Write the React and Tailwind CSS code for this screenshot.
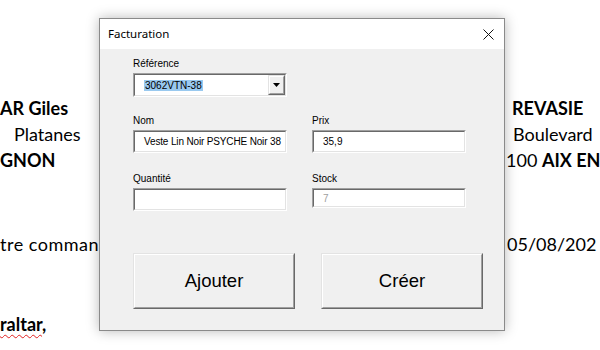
function Sunken({ className = "", children }) {
  return (
    <div className={`border border-t-[#a0a0a0] border-l-[#a0a0a0] border-b-white border-r-white ${className}`}>
      <div className="h-full border border-t-[#696969] border-l-[#696969] border-b-[#e3e3e3] border-r-[#e3e3e3] bg-white flex items-center overflow-hidden">
        {children}
      </div>
    </div>
  );
}

function Raised({ className = "", children }) {
  return (
    <div className={`border border-t-[#e3e3e3] border-l-[#e3e3e3] border-b-[#696969] border-r-[#696969] bg-[#f0f0f0] ${className}`}>
      <div className="h-full border border-t-white border-l-white border-b-[#a0a0a0] border-r-[#a0a0a0] flex items-center justify-center">
        {children}
      </div>
    </div>
  );
}

function Label({ children }) {
  return <div className="h-[14px] leading-[14px] text-[10px] mb-[2px] text-black">{children}</div>;
}

export default function App() {
  return (
    <div className="relative w-[600px] h-[350px] overflow-hidden bg-white">
      {/* document behind */}
      <div className="flex justify-between h-full font-['Lato',sans-serif] text-[18px] text-black whitespace-nowrap">
        <div className="flex flex-col pt-[95px] leading-[26px]">
          <div className="font-bold">AR Giles</div>
          <div className="pl-[14px]">Platanes</div>
          <div className="font-bold">GNON</div>
          <div className="mt-[58px] tracking-[0.5px]">tre comman</div>
          <div className="mt-[54px] font-bold">
            <span className="underline decoration-wavy decoration-[#e02020] decoration-1 underline-offset-[3px]">raltar</span>,
          </div>
        </div>
        <div className="flex flex-col pt-[95px] leading-[26px] w-[94px] overflow-hidden">
          <div className="font-bold pl-[6px]">REVASIE</div>
          <div className="pl-[7px]">Boulevard</div>
          <div>
            100 <span className="font-bold">AIX EN</span>
          </div>
          <div className="mt-[58px] pl-[1px]">05/08/202</div>
        </div>
      </div>

      {/* dialog */}
      <div className="absolute left-[99px] top-[18px] w-[406px] h-[313px] border border-[#8a8a8a] bg-[#f0f0f0] shadow-[0_0_12px_rgba(0,0,0,0.28)] font-['Liberation_Sans',Arial,sans-serif] whitespace-nowrap">
        <div className="h-[30px] bg-white flex items-center justify-between pl-[8px] pr-[10px]">
          <span className="font-['Noto_Sans',sans-serif] text-[11.5px] text-black">Facturation</span>
          <svg width="11" height="11" viewBox="0 0 11 11">
            <path d="M0.5 0.5 L10.5 10.5 M10.5 0.5 L0.5 10.5" stroke="#111" strokeWidth="1" fill="none" />
          </svg>
        </div>
        <div className="flex flex-col pl-[33px] pt-[8px]">
          <Label>Référence</Label>
          <Sunken className="w-[154px] h-[24px]">
            <div className="flex-1 pl-[9px] text-[10px]">
              <span className="bg-[#99c9ef] px-[1px]">3062VTN-38</span>
            </div>
            <Raised className="w-[17px] h-full">
              <svg width="7" height="4" viewBox="0 0 7 4">
                <path d="M0 0 H7 L3.5 4 Z" fill="#000" />
              </svg>
            </Raised>
          </Sunken>

          <div className="grid grid-cols-[154px_154px] gap-x-[25px] mt-[17px]">
            <div>
              <Label>Nom</Label>
              <Sunken className="h-[23px]">
                <span className="pl-[9px] text-[10px] tracking-[-0.15px]">Veste Lin Noir PSYCHE Noir 38</span>
              </Sunken>
            </div>
            <div>
              <Label>Prix</Label>
              <Sunken className="h-[23px]">
                <span className="pl-[9px] text-[10px]">35,9</span>
              </Sunken>
            </div>
          </div>

          <div className="grid grid-cols-[154px_154px] gap-x-[25px] mt-[19px] items-start">
            <div>
              <Label>Quantité</Label>
              <Sunken className="h-[23px]" />
            </div>
            <div>
              <Label>Stock</Label>
              <Sunken className="h-[20px]">
                <span className="pl-[9px] text-[10px] text-[#a0a0a0]">7</span>
              </Sunken>
            </div>
          </div>

          <div className="flex gap-[26px] mt-[42px]">
            <Raised className="w-[162px] h-[56px]">
              <span className="text-[18.5px] text-black">Ajouter</span>
            </Raised>
            <Raised className="w-[162px] h-[56px]">
              <span className="text-[18.5px] text-black">Créer</span>
            </Raised>
          </div>
        </div>
      </div>
    </div>
  );
}
